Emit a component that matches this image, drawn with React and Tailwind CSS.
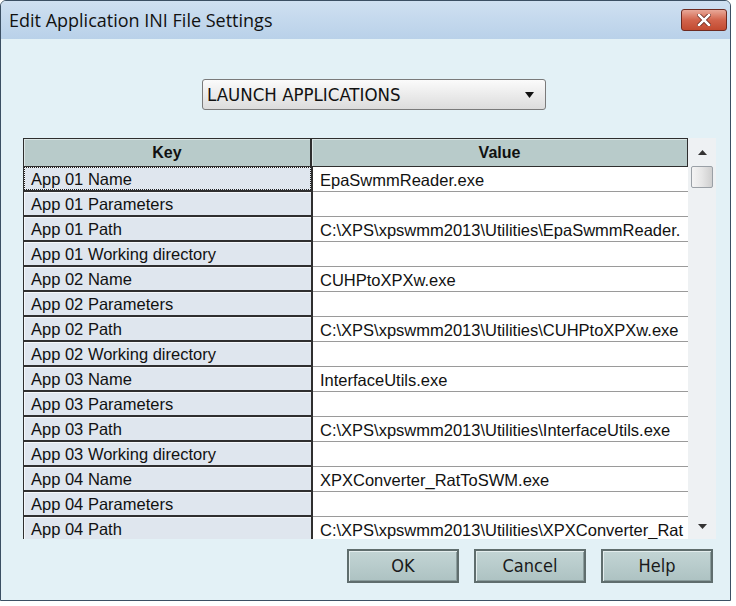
import React from 'react';

const rows = [
  ['App 01 Name', 'EpaSwmmReader.exe'],
  ['App 01 Parameters', ''],
  ['App 01 Path', 'C:\\XPS\\xpswmm2013\\Utilities\\EpaSwmmReader.'],
  ['App 01 Working directory', ''],
  ['App 02 Name', 'CUHPtoXPXw.exe'],
  ['App 02 Parameters', ''],
  ['App 02 Path', 'C:\\XPS\\xpswmm2013\\Utilities\\CUHPtoXPXw.exe'],
  ['App 02 Working directory', ''],
  ['App 03 Name', 'InterfaceUtils.exe'],
  ['App 03 Parameters', ''],
  ['App 03 Path', 'C:\\XPS\\xpswmm2013\\Utilities\\InterfaceUtils.exe'],
  ['App 03 Working directory', ''],
  ['App 04 Name', 'XPXConverter_RatToSWM.exe'],
  ['App 04 Parameters', ''],
  ['App 04 Path', 'C:\\XPS\\xpswmm2013\\Utilities\\XPXConverter_Rat'],
];

const narrow = "font-['DejaVu_Sans_Condensed','Liberation_Sans_Narrow','DejaVu_Sans',sans-serif] [font-stretch:condensed]";

const DlgButton = ({ children }) => (
  <button className="w-[112px] h-[34px] border-2 border-[#5f6d6d] bg-gradient-to-b from-[#c3d5d5] to-[#adc2c2] shadow-[inset_1px_1px_0_#e3eded,inset_-1px_-1px_0_#8a9c9c] text-[18px] text-[#1a1a1a]">
    <span className={narrow}>{children}</span>
  </button>
);

export default function App() {
  return (
    <div className="w-[736px] h-[606px] bg-white font-['Liberation_Sans',Arial,sans-serif]">
      <div className="w-[731px] h-[601px] border border-[#3b4f63] rounded-t-[6px] flex flex-col overflow-hidden bg-[#e3f1f6]">
        {/* title bar */}
        <div className="h-[38px] shrink-0 flex items-center justify-between pl-[8px] pr-[3px] bg-gradient-to-b from-[#cfe0f1] to-[#b9d1e9]">
          <span className="text-[18px] text-[#111] font-['Open_Sans',sans-serif] leading-none">Edit Application INI File Settings</span>
          <div className="w-[46px] h-[22px] rounded-[3px] border border-[#6e2a20] bg-gradient-to-b from-[#e8a898] via-[#d2644c] to-[#c24a30] flex items-center justify-center">
            <svg width="14" height="12" viewBox="0 0 14 12">
              <path d="M2 1 L12 11 M12 1 L2 11" stroke="#5a1a10" strokeWidth="4" strokeLinecap="square" />
              <path d="M2 1 L12 11 M12 1 L2 11" stroke="#fff" strokeWidth="2.6" strokeLinecap="square" />
            </svg>
          </div>
        </div>

        {/* body */}
        <div className="flex-1 flex flex-col pl-[22px]">
          <div className="mt-[40px] ml-[179px] w-[344px] h-[31px] rounded-[3px] border border-[#7a7a7a] bg-gradient-to-b from-[#fbfbfb] to-[#dcdcdc] flex items-center justify-between pl-[4px] pr-[11px]">
            <span className={`${narrow} text-[18.5px] text-[#111]`}>LAUNCH APPLICATIONS</span>
            <svg width="9" height="6" viewBox="0 0 9 6"><path d="M0 0 H9 L4.5 6 Z" fill="#111" /></svg>
          </div>

          {/* grid */}
          <div className="mt-[28px] w-[693px] h-[401px] flex overflow-hidden">
            <div className="w-[665px] flex flex-col">
              <div className="h-[29px] shrink-0 flex border border-[#2e2e2e] bg-[#b8cbca]">
                <div className="w-[288px] h-full flex items-center justify-center font-bold text-[16px] text-[#111] border-r-2 border-[#2e2e2e] shadow-[inset_1px_1px_0_#dbe6e5]">Key</div>
                <div className="flex-1 h-full flex items-center justify-center font-bold text-[16px] text-[#111] shadow-[inset_1px_1px_0_#dbe6e5]">Value</div>
              </div>
              {rows.map(([k, v], i) => (
                <div key={k} className="h-[25px] shrink-0 flex">
                  <div className="w-[290px] h-full bg-[#dfe6ee] border-b-2 border-r-2 border-l border-[#2f2f2f] shadow-[inset_1px_1px_0_#f4f7fa] flex items-center pl-[7px] pt-[2px] relative">
                    {i === 0 && (
                      <div className="absolute inset-0 border border-dotted border-[#222]" />
                    )}
                    <span className="text-[16.5px] leading-none text-[#111] whitespace-nowrap">{k}</span>
                  </div>
                  <div className="flex-1 h-full bg-white border-b border-[#9a9a9a] flex items-center pl-[7px] pt-[2px] overflow-hidden">
                    <span className="text-[16.5px] leading-none text-[#111] whitespace-nowrap">{v}</span>
                  </div>
                </div>
              ))}
            </div>
            <div className="w-[28px] flex flex-col items-center bg-[#eef1f3]">
              <div className="h-[28px] flex items-center justify-center">
                <svg width="9" height="5" viewBox="0 0 9 5"><path d="M0 5 H9 L4.5 0 Z" fill="#333" /></svg>
              </div>
              <div className="w-[22px] h-[22px] rounded-[2px] border border-[#9aa0a6] bg-gradient-to-r from-[#f4f4f4] via-[#e6e6e6] to-[#cfcfcf]" />
              <div className="flex-1" />
              <div className="h-[26px] flex items-center justify-center">
                <svg width="9" height="5" viewBox="0 0 9 5"><path d="M0 0 H9 L4.5 5 Z" fill="#333" /></svg>
              </div>
            </div>
          </div>

          <div className="mt-[10px] ml-[324px] flex gap-[15px]">
            <DlgButton>OK</DlgButton>
            <DlgButton>Cancel</DlgButton>
            <DlgButton>Help</DlgButton>
          </div>
        </div>
      </div>
    </div>
  );
}
